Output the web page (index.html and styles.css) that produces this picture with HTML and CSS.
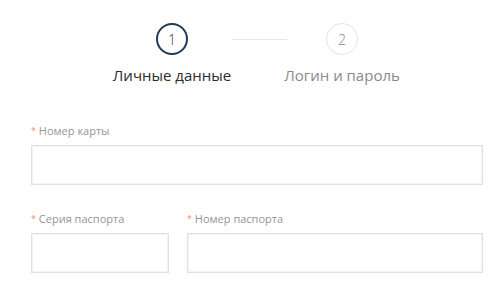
FILE: index.html
```html
<!DOCTYPE html>
<html lang="ru">
  <head>
    <meta charset="UTF-8" />
    <meta name="viewport" content="width=device-width, initial-scale=1.0" />
    <title>Регистрация</title>
    <link rel="stylesheet" href="styles.css">
  </head>
  <body>
    <div class="page">
      <!-- шаги -->
      <div class="steps">
        <div class="circle active">1</div>
        <div class="connector"></div>
        <div class="circle">2</div>
        <div class="step_name active">Личные данные</div>
        <div></div>
        <div class="step_name">Логин и пароль</div>
      </div>

      <!-- форма -->
      <form class="form">
        <div class="field">
          <label class="label"><span class="star">*</span> Номер карты</label>
          <input class="input" type="text">
        </div>

        <div class="row">
          <div class="field series">
            <label class="label"><span class="star">*</span> Серия паспорта</label>
            <input class="input" type="text">
          </div>
          <div class="field number">
            <label class="label"><span class="star">*</span> Номер паспорта</label>
            <input class="input" type="text">
          </div>
        </div>
      </form>
    </div>
  </body>
</html>
```

FILE: styles.css
```css
*,
*::before,
*::after {
  margin: 0;
  padding: 0;
  box-sizing: border-box;
}

body {
  font-family: "Open Sans", "Liberation Sans", sans-serif;
  background: #ffffff;
  color: #333333;
}

/* ---------------- страница ---------------- */
.page {
  padding: 23px 17px 0 31px;
}

/* ---------------- шаги ---------------- */
.steps {
  display: grid;
  grid-template-columns: 115px 55px 115px;
  justify-content: center;
  justify-items: center;
  align-items: center;
  row-gap: 10px;
}

.circle {
  width: 32px;
  height: 32px;
  border-radius: 50%;
  border: 1px solid #e4e4e4;

  display: flex;
  justify-content: center;
  align-items: center;

  font-size: 14px;
  font-weight: 300;
  color: #8a8a8a;
}

.circle.active {
  border: 2px solid #1f3a58;
  color: #333333;
}

.connector {
  width: 55px;
  height: 1px;
  margin-left: 4px;
  background: #e6e6e6;
}

.step_name {
  font-size: 15px;
  line-height: 20px;
  color: #8a8a8a;
  white-space: nowrap;
}

.step_name.active {
  color: #2b2b2b;
}

/* ---------------- форма ---------------- */
.form {
  margin-top: 39px;
  display: flex;
  flex-direction: column;
  gap: 27px;
}

.field {
  display: flex;
  flex-direction: column;
  gap: 7px;
}

.label {
  font-size: 11px;
  line-height: 14px;
  color: #959595;
}

.star {
  font-size: 9px;
  vertical-align: top;
  color: #e8906a;
}

.input {
  height: 40px;
  border: 1px solid #e0e0e0;
  box-shadow: inset 0 0 0 1px #f3f3f3;
  background: #ffffff;
  outline: none;
}

.row {
  display: flex;
  gap: 18px;
}

.series {
  width: 138px;
}

.number {
  flex: 1;
}
```
